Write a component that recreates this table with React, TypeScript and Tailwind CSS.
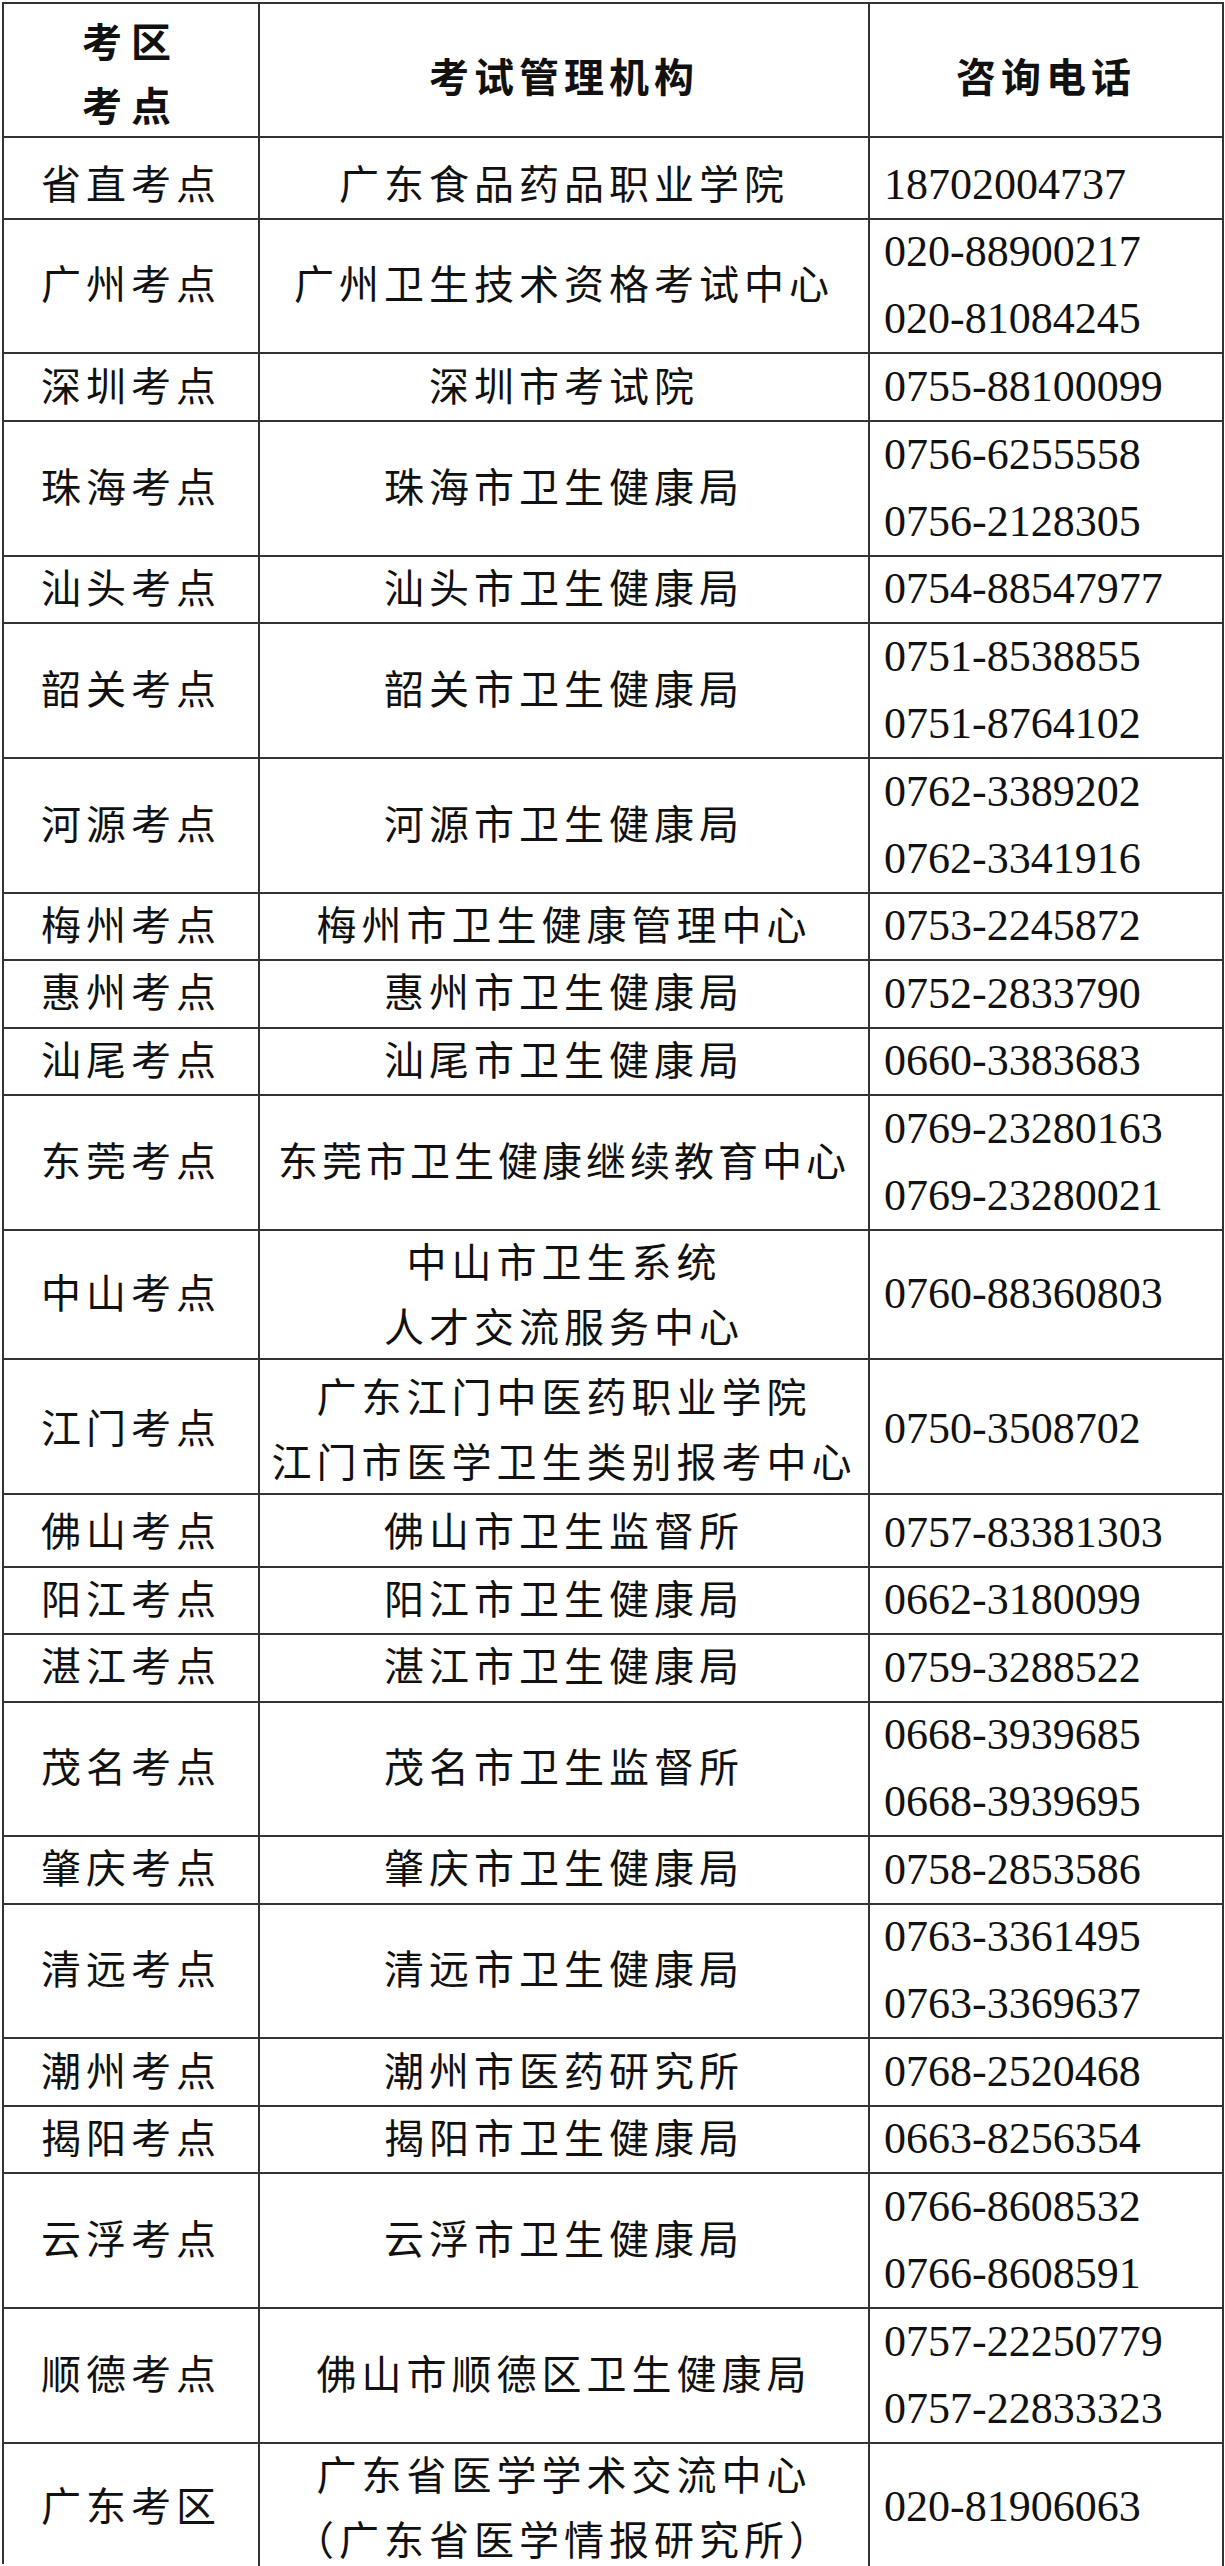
import React from "react";

type Row = {
  area: string;
  org: string[];
  tel: string[];
  tight?: boolean;
};

const rows: Row[] = [
  { area: "省直考点", org: ["广东食品药品职业学院"], tel: ["18702004737"] },
  { area: "广州考点", org: ["广州卫生技术资格考试中心"], tel: ["020-88900217", "020-81084245"] },
  { area: "深圳考点", org: ["深圳市考试院"], tel: ["0755-88100099"] },
  { area: "珠海考点", org: ["珠海市卫生健康局"], tel: ["0756-6255558", "0756-2128305"] },
  { area: "汕头考点", org: ["汕头市卫生健康局"], tel: ["0754-88547977"] },
  { area: "韶关考点", org: ["韶关市卫生健康局"], tel: ["0751-8538855", "0751-8764102"] },
  { area: "河源考点", org: ["河源市卫生健康局"], tel: ["0762-3389202", "0762-3341916"] },
  { area: "梅州考点", org: ["梅州市卫生健康管理中心"], tel: ["0753-2245872"] },
  { area: "惠州考点", org: ["惠州市卫生健康局"], tel: ["0752-2833790"] },
  { area: "汕尾考点", org: ["汕尾市卫生健康局"], tel: ["0660-3383683"] },
  { area: "东莞考点", org: ["东莞市卫生健康继续教育中心"], tel: ["0769-23280163", "0769-23280021"], tight: true },
  { area: "中山考点", org: ["中山市卫生系统", "人才交流服务中心"], tel: ["0760-88360803"] },
  { area: "江门考点", org: ["广东江门中医药职业学院", "江门市医学卫生类别报考中心"], tel: ["0750-3508702"] },
  { area: "佛山考点", org: ["佛山市卫生监督所"], tel: ["0757-83381303"] },
  { area: "阳江考点", org: ["阳江市卫生健康局"], tel: ["0662-3180099"] },
  { area: "湛江考点", org: ["湛江市卫生健康局"], tel: ["0759-3288522"] },
  { area: "茂名考点", org: ["茂名市卫生监督所"], tel: ["0668-3939685", "0668-3939695"] },
  { area: "肇庆考点", org: ["肇庆市卫生健康局"], tel: ["0758-2853586"] },
  { area: "清远考点", org: ["清远市卫生健康局"], tel: ["0763-3361495", "0763-3369637"] },
  { area: "潮州考点", org: ["潮州市医药研究所"], tel: ["0768-2520468"] },
  { area: "揭阳考点", org: ["揭阳市卫生健康局"], tel: ["0663-8256354"] },
  { area: "云浮考点", org: ["云浮市卫生健康局"], tel: ["0766-8608532", "0766-8608591"] },
  { area: "顺德考点", org: ["佛山市顺德区卫生健康局"], tel: ["0757-22250779", "0757-22833323"] },
  { area: "广东考区", org: ["广东省医学学术交流中心", "（广东省医学情报研究所）"], tel: ["020-81906063"] },
];

const cjk = "font-['Noto_Sans_CJK_SC',sans-serif]";
const cell = "border-r-2 border-b-2 border-[#333] flex";

function TableRow({ row }: { row: Row }) {
  const tall = row.org.length > 1 || row.tel.length > 1;
  const orgLines = row.org.length > 1;

  return (
    <div className={`grid grid-cols-[256px_610px_354px] ${tall ? "h-[134.8px]" : "h-[67.4px]"}`}>
      {/* 考点 */}
      <div className={`${cell} items-center justify-center pt-[8px]`}>
        <span className={`${cjk} text-[40px] leading-[67px] tracking-[5px] text-[#111]`}>{row.area}</span>
      </div>

      {/* 管理机构 */}
      <div className={`${cell} flex-col items-center justify-center ${orgLines ? "pt-[12px]" : "pt-[8px]"}`}>
        {row.org.map((line) => (
          <span
            key={line}
            className={`${cjk} text-[40px] whitespace-nowrap text-[#111] ${orgLines ? "leading-[65px]" : "leading-[67px]"} ${
              row.tight ? "tracking-[4px]" : "tracking-[5px]"
            }`}
          >
            {line}
          </span>
        ))}
      </div>

      {/* 电话 */}
      <div className={`${cell} flex-col justify-center pl-[14px] pt-[13px]`}>
        {row.tel.map((t) => (
          <span key={t} className="font-['Liberation_Serif',serif] text-[44px] leading-[67px] text-[#111]">
            {t}
          </span>
        ))}
      </div>
    </div>
  );
}

export default function App() {
  return (
    <div className="min-h-screen w-[1225px] bg-white pt-[2px] pl-[2px]">
      <div className="w-[1222px] border-l-2 border-t-2 border-[#333]">
        {/* Header */}
        <div className="grid grid-cols-[256px_610px_354px] h-[134px]">
          <div className={`${cell} flex-col items-center justify-center pt-[4px]`}>
            <span className={`${cjk} font-bold text-[40px] leading-[64px] tracking-[9px] text-[#111]`}>考区</span>
            <span className={`${cjk} font-bold text-[40px] leading-[64px] tracking-[9px] text-[#111]`}>考点</span>
          </div>
          <div className={`${cell} items-center justify-center pt-[10px]`}>
            <span className={`${cjk} font-bold text-[40px] leading-[64px] tracking-[5px] text-[#111]`}>考试管理机构</span>
          </div>
          <div className={`${cell} items-center justify-center pt-[10px]`}>
            <span className={`${cjk} font-bold text-[40px] leading-[64px] tracking-[5px] text-[#111]`}>咨询电话</span>
          </div>
        </div>

        {rows.map((row) => (
          <TableRow key={row.area} row={row} />
        ))}
      </div>
    </div>
  );
}
